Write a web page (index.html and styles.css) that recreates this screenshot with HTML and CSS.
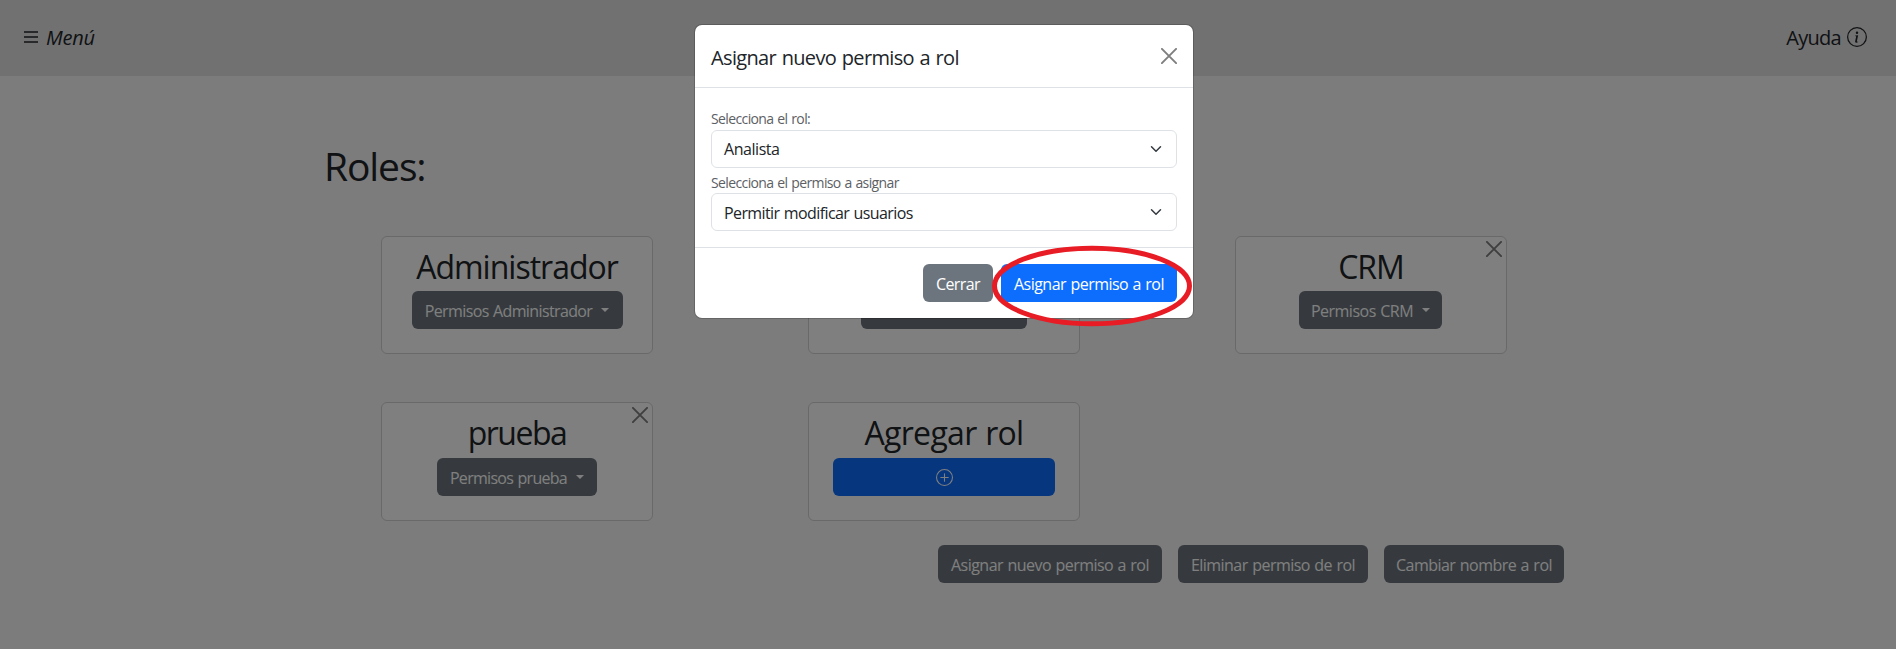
FILE: index.html
```html
<!DOCTYPE html>
<html lang="es">
<head>
<meta charset="utf-8">
<title>Roles</title>
<link rel="stylesheet" href="styles.css">
</head>
<body>
<div class="page">
  <header class="topbar">
    <a class="menu"><svg class="burger" width="14" height="12" viewBox="0 0 14 12"><path d="M0 1h14M0 6h14M0 11h14" stroke="currentColor" stroke-width="1.7"/></svg><i>Menú</i></a>
    <a class="help"><span>Ayuda</span><svg width="20" height="20" viewBox="0 0 16 16" fill="currentColor"><path d="M8 15A7 7 0 1 1 8 1a7 7 0 0 1 0 14m0 1A8 8 0 1 0 8 0a8 8 0 0 0 0 16"/><path d="m8.930 6.588-2.290.287-.082.380.450.083c.294.070.352.176.288.469l-.738 3.468c-.194.897.105 1.319.808 1.319.545 0 1.178-.252 1.465-.598l.088-.416c-.2.176-.492.246-.686.246-.275 0-.375-.193-.304-.533zM9 4.500a1 1 0 1 1-2 0 1 1 0 0 1 2 0"/></svg></a>
  </header>
  <main class="content">
    <h1 class="title">Roles:</h1>
    <section class="grid">
      <article class="card"><h2 class="name t-admin">Administrador</h2><button class="btn drop w211"><span class="t-padmin">Permisos Administrador</span></button></article>
      <article class="card"><h2 class="name">Analista</h2><button class="btn drop w166"><span>Permisos Analista</span></button></article>
      <article class="card"><svg class="x" width="16" height="16" viewBox="0 0 16 16"><path d="M.9.900l14.200 14.200M15.100.900L.9 15.100" stroke="#000" stroke-width="1.900" stroke-linecap="round"/></svg><h2 class="name t-crm">CRM</h2><button class="btn drop w143"><span class="t-pcrm">Permisos CRM</span></button></article>
      <article class="card"><svg class="x" width="16" height="16" viewBox="0 0 16 16"><path d="M.9.900l14.200 14.200M15.100.900L.9 15.100" stroke="#000" stroke-width="1.900" stroke-linecap="round"/></svg><h2 class="name t-prueba">prueba</h2><button class="btn drop w160"><span class="t-pprueba">Permisos prueba</span></button></article>
      <article class="card"><h2 class="name t-agregar">Agregar rol</h2><button class="btn primary wide"><svg width="17" height="17" viewBox="0 0 16 16" fill="currentColor"><path d="M8 15A7 7 0 1 1 8 1a7 7 0 0 1 0 14m0 1A8 8 0 1 0 8 0a8 8 0 0 0 0 16"/><path d="M8 4a.5.500 0 0 1 .5.500v3h3a.5.500 0 0 1 0 1h-3v3a.5.500 0 0 1-1 0v-3h-3a.5.500 0 0 1 0-1h3v-3A.5.500 0 0 1 8 4"/></svg></button></article>
    </section>
    <div class="actions">
      <button class="btn w224"><span>Asignar nuevo permiso a rol</span></button>
      <button class="btn w190"><span>Eliminar permiso de rol</span></button>
      <button class="btn w180"><span>Cambiar nombre a rol</span></button>
    </div>
  </main>
  <div class="backdrop"></div>
  <div class="modal">
    <div class="modal-head"><h5 class="modal-title">Asignar nuevo permiso a rol</h5><svg class="close" width="16" height="16" viewBox="0 0 16 16"><path d="M.9.900l14.200 14.200M15.100.900L.9 15.100" stroke="#000" stroke-width="1.900" stroke-linecap="round"/></svg></div>
    <div class="modal-body">
      <label class="label l1">Selecciona el rol:</label>
      <div class="select"><span class="t-analista">Analista</span><svg width="12" height="12" viewBox="0 0 16 16"><path fill="none" stroke="#343a40" stroke-linecap="round" stroke-linejoin="round" stroke-width="2" d="m2 5 6 6 6-6"/></svg></div>
      <label class="label l2">Selecciona el permiso a asignar</label>
      <div class="select"><span class="t-permitir">Permitir modificar usuarios</span><svg width="12" height="12" viewBox="0 0 16 16"><path fill="none" stroke="#343a40" stroke-linecap="round" stroke-linejoin="round" stroke-width="2" d="m2 5 6 6 6-6"/></svg></div>
    </div>
    <div class="modal-foot">
      <button class="btn w70"><span class="t-cerrar">Cerrar</span></button>
      <button class="btn primary w176"><span>Asignar permiso a rol</span></button>
    </div>
  </div>
  <svg class="mark" width="202" height="84" viewBox="0 0 202 84"><ellipse cx="101" cy="42" rx="97.500" ry="37.800" fill="none" stroke="#e81c24" stroke-width="5"/></svg>
</div>
</body>
</html>
```
FILE: styles.css
```css
* { box-sizing: border-box; }
body { margin: 0; background: #fff; font-family: "Open Sans", "Noto Sans", sans-serif; font-size: 16px; color: #212529; overflow: hidden; }
.page { position: relative; width: 1896px; height: 649px; background: #f9f9fb; overflow: hidden; }
.topbar { height: 76px; background: #e3e3e5; display: flex; justify-content: space-between; align-items: center; padding: 0 29px 2px 24px; font-size: 20px; }
.menu { display: flex; align-items: center; gap: 8px; letter-spacing: -.2px; }
.help { display: flex; align-items: center; gap: 6px; letter-spacing: -.7px; }
.content { width: 1280px; margin: 0 auto; padding: 66px 24px 0 16px; }
.title { margin: 0; font-size: 39px; font-weight: 400; line-height: 48px; letter-spacing: -1.1px; }
.grid { display: grid; grid-template-columns: repeat(3, 272px); grid-template-rows: 118px 119px; column-gap: 155px; row-gap: 48px; margin: 46px 0 0 57px; }
.card { position: relative; background: #fff; border: 1px solid #d2d2d3; border-radius: 6px; display: flex; flex-direction: column; align-items: center; padding-top: 11px; }
.card:nth-child(n+4) .name { margin-bottom: 6px; }
.x { position: absolute; right: 4px; top: 4px; opacity: .5; }
.name { margin: 0 0 5px; font-size: 32px; font-weight: 400; line-height: 38px; letter-spacing: -.8px; white-space: nowrap; }
.btn { height: 38px; border: 0; border-radius: 6px; background: #6c757d; color: #fff; font: inherit; padding: 1px 0 0; display: flex; align-items: center; justify-content: center; white-space: nowrap; letter-spacing: -.53px; word-spacing: .8px; }
.drop::after { content: ""; margin: -2px 0 0 9px; border-top: 4.800px solid; border-left: 4.800px solid transparent; border-right: 4.800px solid transparent; }
.primary { background: #0d6efd; }
.wide { width: 222px; }
.w211 { width: 211px; } .w166 { width: 166px; } .w143 { width: 143px; } .w160 { width: 160px; }
.w224 { width: 224px; } .w190 { width: 190px; } .w180 { width: 180px; } .w70 { width: 70px; } .w176 { width: 176px; }
.w143 { margin-right: 1px; }
.t-admin { letter-spacing: -1px; }
.t-prueba { letter-spacing: -1.5px; }
.t-crm { letter-spacing: -1.1px; }
.t-agregar { letter-spacing: -.7px; word-spacing: 1px; }
.t-padmin { letter-spacing: -.62px; }
.t-pcrm { letter-spacing: -.5px; }
.t-pprueba { letter-spacing: -.7px; }
.t-permitir { letter-spacing: -.6px; word-spacing: .8px; padding-top: 1px; }
.t-analista { letter-spacing: -.45px; }
.t-cerrar { letter-spacing: -.6px; }
.actions { display: flex; justify-content: flex-end; gap: 16px; margin-top: 24px; }
.backdrop { position: absolute; inset: 0; background: rgba(0,0,0,.5); }
.modal { position: absolute; left: 695px; top: 25px; width: 498px; height: 293px; background: #fff; border-radius: 7px; box-shadow: 0 0 0 1px rgba(0,0,0,.18); }
.modal-head { height: 63px; border-bottom: 1px solid #dee2e6; display: flex; justify-content: space-between; padding: 17px 16px 0; }
.modal-title { margin: 0; font-size: 20px; line-height: 32px; font-weight: 400; letter-spacing: -.65px; word-spacing: 1px; }
.close { opacity: .5; margin-top: 6px; }
.modal-body { padding: 20px 16px 0; height: 160px; border-bottom: 1px solid #dee2e6; }
.label { display: block; font-size: 14px; line-height: 21px; color: #5c6064; letter-spacing: -.62px; word-spacing: .8px; }
.l1 { margin-bottom: 1px; }
.l2 { margin-top: 4px; }
.select { height: 38px; border: 1px solid #dee2e6; border-radius: 6px; display: flex; align-items: center; justify-content: space-between; padding: 0 14px 0 12px; }
.modal-foot { display: flex; justify-content: flex-end; gap: 8px; padding: 16px; }
.mark { position: absolute; left: 991px; top: 244px; }
```
